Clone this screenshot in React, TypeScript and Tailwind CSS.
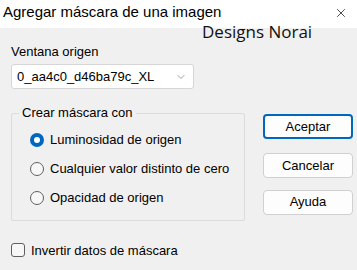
import { ChevronDown, X } from "lucide-react";

const font = { fontFamily: '"Liberation Sans", Arial, sans-serif' };

function Radio({ checked, label }: { checked?: boolean; label: string }) {
  return (
    <div className="flex items-center h-[29px]">
      {checked ? (
        <span className="w-[14px] h-[14px] rounded-full bg-[#0067c0] flex items-center justify-center">
          <span className="w-[6px] h-[6px] rounded-full bg-white" />
        </span>
      ) : (
        <span className="w-[14px] h-[14px] rounded-full border border-[#5f5f5f] bg-[#f7f7f7]" />
      )}
      <span className="ml-[6px] text-[13px] leading-none text-black">{label}</span>
    </div>
  );
}

function Btn({ label, primary }: { label: string; primary?: boolean }) {
  return (
    <button
      className={`w-[90px] h-[25px] rounded-[4px] bg-[#fdfdfd] text-[13px] text-black ${
        primary ? "border-2 border-[#0067c0]" : "border border-[#d0d0d0]"
      }`}
    >
      {label}
    </button>
  );
}

export default function App() {
  return (
    <div className="w-[357px] h-[270px] bg-[#f0f0f0] overflow-hidden" style={font}>
      <div className="h-[28px] bg-white flex items-start justify-between">
        <span className="ml-[3px] mt-[3px] text-[15px] leading-[18px] text-black">
          Agregar máscara de una imagen
        </span>
        <X className="mt-[6px] mr-[9px] w-[14px] h-[14px] text-black" strokeWidth={1.2} />
      </div>
      <div className="relative">
        <span
          className="absolute left-[202px] top-[-5px] text-[17px] leading-none text-[#111]"
          style={{ fontFamily: '"Open Sans", "Noto Sans", sans-serif' }}
        >
          Designs Norai
        </span>
      </div>
      <div className="flex">
        <div className="pl-[11px] w-[250px]">
          <div className="mt-[17px] text-[13px] leading-none text-black">Ventana origen</div>
          <div className="mt-[6px] w-[183px] h-[25px] bg-white border border-[#d6d6d6] rounded-[3px] flex items-center justify-between pl-[5px] pr-[6px]">
            <span className="text-[13px] text-black">0_aa4c0_d46ba79c_XL</span>
            <ChevronDown className="w-[12px] h-[12px] text-[#707070]" strokeWidth={1.3} />
          </div>
          <div className="relative mt-[24px] w-[234px] h-[108px] border border-[#dcdcdc] rounded-[2px]">
            <span className="absolute left-[7px] top-[-8px] px-[3px] bg-[#f0f0f0] text-[13px] leading-none text-black">
              Crear máscara con
            </span>
            <div className="pt-[11px] pl-[18px]">
              <Radio checked label="Luminosidad de origen" />
              <Radio label="Cualquier valor distinto de cero" />
              <Radio label="Opacidad de origen" />
            </div>
          </div>
          <div className="mt-[22px] flex items-center">
            <span className="w-[14px] h-[14px] rounded-[3px] border border-[#5f5f5f] bg-[#f7f7f7]" />
            <span className="ml-[6px] text-[13px] leading-none text-black">Invertir datos de máscara</span>
          </div>
        </div>
        <div className="pl-[13px] pt-[86px] flex flex-col">
          <Btn label="Aceptar" primary />
          <div className="mt-[14px]">
            <Btn label="Cancelar" />
          </div>
          <div className="mt-[11px]">
            <Btn label="Ayuda" />
          </div>
        </div>
      </div>
    </div>
  );
}
